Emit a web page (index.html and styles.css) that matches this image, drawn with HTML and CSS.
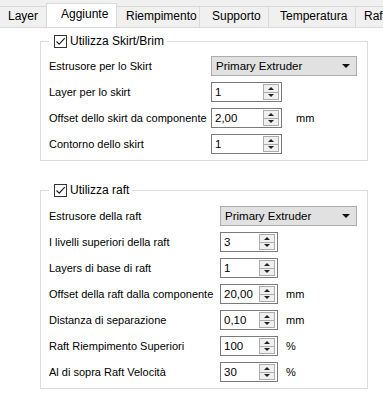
FILE: index.html
```html
<!DOCTYPE html>
<html>

<head>
    <meta charset="UTF-8">
    <title>Aggiunte</title>
    <link rel="stylesheet" href="styles.css">
</head>

<body>
    <div id="tabs">
        <span class="tab tab-layer">Layer</span>
        <span class="tab tab-aggiunte active">Aggiunte</span>
        <span class="tab tab-riemp">Riempimento</span>
        <span class="tab tab-supporto">Supporto</span>
        <span class="tab tab-temp">Temperatura</span>
        <span class="tab tab-raft">Raft</span>
    </div>

    <div id="page">
        <fieldset class="group group-skirt">
            <legend>
                <span class="check">
                    <svg width="11" height="11" viewBox="0 0 11 11">
                        <path d="M1.5 5.5 L4.2 8.2 L9.8 2.2" fill="none" stroke="#222" stroke-width="1.2" />
                    </svg>
                </span>
                Utilizza Skirt/Brim
            </legend>
            <div class="rows">
                <span class="label">Estrusore per lo Skirt</span>
                <div class="combo wide">Primary Extruder<span class="caret"></span></div>

                <span class="label">Layer per lo skirt</span>
                <div class="spin"><span class="val">1</span><span class="arrows"><i class="up"></i><i class="down"></i></span></div>
                <span></span>

                <span class="label">Offset dello skirt da componente</span>
                <div class="spin"><span class="val">2,00</span><span class="arrows"><i class="up"></i><i class="down"></i></span></div>
                <span class="unit">mm</span>

                <span class="label">Contorno dello skirt</span>
                <div class="spin"><span class="val">1</span><span class="arrows"><i class="up"></i><i class="down"></i></span></div>
                <span></span>
            </div>
        </fieldset>

        <fieldset class="group group-raft">
            <legend>
                <span class="check">
                    <svg width="11" height="11" viewBox="0 0 11 11">
                        <path d="M1.5 5.5 L4.2 8.2 L9.8 2.2" fill="none" stroke="#222" stroke-width="1.2" />
                    </svg>
                </span>
                Utilizza raft
            </legend>
            <div class="rows">
                <span class="label">Estrusore della raft</span>
                <div class="combo wide">Primary Extruder<span class="caret"></span></div>

                <span class="label">I livelli superiori della raft</span>
                <div class="spin"><span class="val">3</span><span class="arrows"><i class="up"></i><i class="down"></i></span></div>
                <span></span>

                <span class="label">Layers di base di raft</span>
                <div class="spin"><span class="val">1</span><span class="arrows"><i class="up"></i><i class="down"></i></span></div>
                <span></span>

                <span class="label">Offset della raft dalla componente</span>
                <div class="spin"><span class="val">20,00</span><span class="arrows"><i class="up"></i><i class="down"></i></span></div>
                <span class="unit">mm</span>

                <span class="label">Distanza di separazione</span>
                <div class="spin"><span class="val">0,10</span><span class="arrows"><i class="up"></i><i class="down"></i></span></div>
                <span class="unit">mm</span>

                <span class="label">Raft Riempimento Superiori</span>
                <div class="spin"><span class="val">100</span><span class="arrows"><i class="up"></i><i class="down"></i></span></div>
                <span class="unit">%</span>

                <span class="label">Al di sopra Raft Velocità</span>
                <div class="spin"><span class="val">30</span><span class="arrows"><i class="up"></i><i class="down"></i></span></div>
                <span class="unit">%</span>
            </div>
        </fieldset>
    </div>
</body>

</html>
```

FILE: styles.css
```css
* {
    box-sizing: border-box;
}

body,
html {
    margin: 0;
    padding: 0;
    overflow: hidden;
    background-color: white;
    color: black;
    font-family: "Liberation Sans", Arial, sans-serif;
    font-size: 11px;
}

/* tab strip */

#tabs {
    display: flex;
    align-items: flex-end;
    height: 28px;
    background-color: #f0f0f0;
    border-bottom: 1px solid #d9d9d9;
    white-space: nowrap;
    overflow: hidden;
}

.tab {
    height: 21px;
    line-height: 19px;
    padding: 0 8px;
    border: 1px solid #d9d9d9;
    border-bottom: none;
    border-left: none;
    background-color: #f0f0f0;
    font-size: 12px;
}

.tab.active {
    height: 25px;
    line-height: 21px;
    background-color: white;
    border-left: 1px solid #d9d9d9;
    margin-left: -1px;
    margin-bottom: -1px;
}

.tab-layer { width: 47px; padding-left: 8px; }
.tab-aggiunte { width: 71px; padding-left: 14px; }
.tab-riemp { width: 83px; padding-left: 9px; }
.tab-supporto { width: 69px; padding-left: 12px; }
.tab-temp { width: 87px; padding-left: 11px; }
.tab-raft { flex: 1; padding-left: 8px; border-right: none; }

/* group boxes */

#page {
    padding: 6px 15px 0 40px;
}

.group {
    margin: 0 0 22px 0;
    padding: 8px 10px 6px 8px;
    border: 1px solid #dcdcdc;
    min-width: 0;
}

.group-raft {
    padding-top: 9px;
}

legend {
    padding: 0 3px 0 5px;
    display: flex;
    align-items: center;
    gap: 3px;
    font-size: 12px;
    line-height: 14px;
    height: 14px;
}

.check {
    display: inline-block;
    width: 13px;
    height: 13px;
    border: 1px solid #333;
    background-color: white;
}

.check svg {
    display: block;
}

.rows {
    display: grid;
    grid-template-columns: 162px 71px 1fr;
    grid-auto-rows: 20px;
    row-gap: 6px;
    align-items: center;
}

.group-raft .rows {
    grid-template-columns: 171px 58px 1fr;
}

.label {
    white-space: nowrap;
    font-size: 11px;
}

.unit {
    padding-left: 14px;
}

.group-raft .unit {
    padding-left: 8px;
}

/* combobox */

.combo {
    grid-column: 2 / 4;
    height: 20px;
    line-height: 18px;
    padding-left: 4px;
    border: 1px solid #adadad;
    background-color: #e1e1e1;
    position: relative;
    font-size: 11.5px;
}

.caret {
    position: absolute;
    right: 6px;
    top: 7px;
    border-left: 4px solid transparent;
    border-right: 4px solid transparent;
    border-top: 4px solid #111;
}

/* spinbox */

.spin {
    display: flex;
    height: 20px;
    border: 1px solid #7a7a7a;
    background-color: white;
    padding: 1px;
}

.val {
    flex: 1;
    line-height: 16px;
    padding-left: 2px;
    font-size: 11.5px;
}

.arrows {
    display: flex;
    flex-direction: column;
    width: 16px;
    border: 1px solid #acacac;
    background-color: #f0f0f0;
    margin-right: 1px;
}

.arrows i {
    flex: 1;
    display: flex;
    align-items: center;
    justify-content: center;
}

.arrows i.up {
    border-bottom: 1px solid #acacac;
}

.arrows i::after {
    content: "";
    border-left: 3px solid transparent;
    border-right: 3px solid transparent;
}

.arrows i.up::after {
    border-bottom: 3px solid #222;
}

.arrows i.down::after {
    border-top: 3px solid #222;
}
```
